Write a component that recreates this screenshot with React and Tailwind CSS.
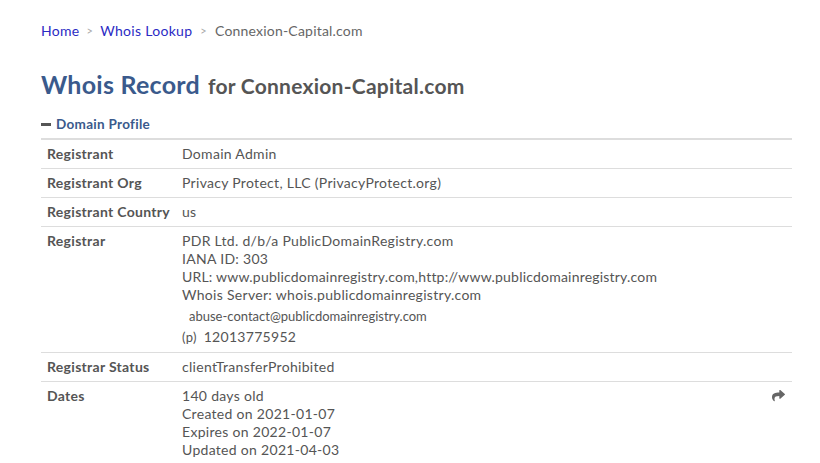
import React from 'react';

const rows = [
  { label: 'Registrant', lines: ['Domain Admin'] },
  { label: 'Registrant Org', lines: ['Privacy Protect, LLC (PrivacyProtect.org)'] },
  { label: 'Registrant Country', lines: ['us'] },
];

const ShareIcon = () => (
  <svg width="13" height="12" viewBox="0 0 512 448" fill="#666">
    <path d="M503.7 141.6L327.7 -10.4C312.3 -23.7 288 -12.9 288 7.7v80.1C127.4 89.6 0 121.8 0 274.2c0 61.5 39.6 122.4 83.4 154.2 13.7 9.9 33.1-2.5 28.1-18.6C66.1 264.5 132.8 225.6 288 223.4V311.3c0 20.6 24.3 31.4 39.7 18.1l176-152c11.1-9.6 11.1-26.7 0-35.8z" />
  </svg>
);

const Row = ({ label, children, last }) => (
  <div className={`flex px-[6px] py-[5px] ${last ? '' : 'border-b border-[#dddddd]'}`}>
    <div className="w-[135px] shrink-0 font-bold text-[#555]">{label}</div>
    <div className="flex-1 text-[#555]">{children}</div>
  </div>
);

export default function App() {
  return (
    <div
      className="w-[820px] h-[463px] overflow-hidden bg-white px-[41px] pt-[22px] text-[14px] leading-[18px] tracking-[0.3px]"
      style={{ fontFamily: 'Lato, "Open Sans", sans-serif' }}
    >
      <div className="flex items-center">
        <span className="text-[#2b2bc4]">Home</span>
        <span className="text-[#aaa] text-[11px] mx-[7px]">&gt;</span>
        <span className="text-[#2b2bc4]">Whois Lookup</span>
        <span className="text-[#aaa] text-[11px] ml-[8px] mr-[8px]">&gt;</span>
        <span className="text-[#666] tracking-[0.2px]">Connexion-Capital.com</span>
      </div>

      <h1 className="mt-[29px] flex items-baseline leading-[30px] tracking-[0.25px]">
        <span className="text-[25px] font-bold text-[#3a5a8c]">Whois Record</span>
        <span className="ml-[8px] text-[21px] font-bold text-[#555]">for Connexion-Capital.com</span>
      </h1>

      <div className="mt-[14px] flex items-center text-[13.5px] font-bold text-[#3a5a8c]">
        <span className="inline-block w-[10px] h-[3px] bg-[#555] mr-[5px]" />
        Domain Profile
      </div>

      <div className="mt-[5px] w-[751px] border-t-2 border-[#dddddd]">
        {rows.map((r) => (
          <Row key={r.label} label={r.label}>
            {r.lines.map((l) => (
              <div key={l}>{l}</div>
            ))}
          </Row>
        ))}
        <Row label="Registrar">
          <div>PDR Ltd. d/b/a PublicDomainRegistry.com</div>
          <div>IANA ID: 303</div>
          <div className="tracking-[0.2px]">URL: www.publicdomainregistry.com,http://www.publicdomainregistry.com</div>
          <div>Whois Server: whois.publicdomainregistry.com</div>
          <div className="pl-[7px] text-[13px] tracking-normal leading-[21px] pt-[2px]">abuse-contact@publicdomainregistry.com</div>
          <div className="leading-[19px]">
            <span className="text-[13px]">(p)</span>
            <span className="ml-[7px]">12013775952</span>
          </div>
        </Row>
        <Row label="Registrar Status">
          <div>clientTransferProhibited</div>
        </Row>
        <Row label="Dates" last>
          <div className="flex justify-between">
            <div>
              <div>140 days old</div>
              <div>Created on 2021-01-07</div>
              <div>Expires on 2022-01-07</div>
              <div>Updated on 2021-04-03</div>
            </div>
            <div className="pt-[3px] pr-[1px]">
              <ShareIcon />
            </div>
          </div>
        </Row>
      </div>
    </div>
  );
}
